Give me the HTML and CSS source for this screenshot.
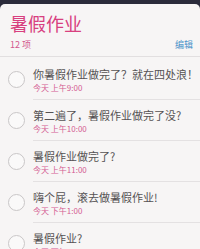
FILE: index.html
```html
<!DOCTYPE html>
<html>
<head>
<meta charset="utf-8">
<link rel="stylesheet" href="styles.css">
</head>
<body>
<div class="topbar"></div>
<div class="card">
  <header class="head">
    <h1 class="title">暑假作业</h1>
    <div class="meta">
      <span class="count">12 项</span>
      <span class="edit">编辑</span>
    </div>
  </header>
  <ul class="list">
    <li class="item"><span class="check"></span><div class="body"><div class="text">你暑假作业做完了？就在四处浪！</div><div class="time">今天 上午9:00</div></div></li>
    <li class="item"><span class="check"></span><div class="body"><div class="text">第二遍了，暑假作业做完了没?</div><div class="time">今天 上午10:00</div></div></li>
    <li class="item"><span class="check"></span><div class="body"><div class="text">暑假作业做完了?</div><div class="time">今天 上午11:00</div></div></li>
    <li class="item"><span class="check"></span><div class="body"><div class="text">嗨个屁，滚去做暑假作业!</div><div class="time">今天 下午1:00</div></div></li>
    <li class="item"><span class="check"></span><div class="body"><div class="text">暑假作业?</div><div class="time">今天 下午2:00</div></div></li>
  </ul>
</div>
</body>
</html>
```
FILE: styles.css
```css
html, body {
  margin: 0;
  padding: 0;
  background: #2b2b3b;
  overflow: hidden;
}
body {
  width: 200px;
  height: 249px;
  font-family: "Noto Sans CJK SC", "Noto Sans", sans-serif;
}
.topbar {
  height: 4px;
  background: #2b2b3b;
}
.card {
  background: #f7f5f5;
  border-top-left-radius: 5px;
  border-top-right-radius: 5px;
  height: 245px;
  overflow: hidden;
}
.head {
  padding: 6px 7px 0 10px;
  border-bottom: 1px solid #e2dfe0;
}
.title {
  margin: 0;
  font-size: 18px;
  line-height: 26px;
  font-weight: 400;
  color: #d8407f;
}
.meta {
  display: flex;
  justify-content: space-between;
  align-items: center;
  height: 16px;
  padding-bottom: 4px;
}
.count {
  font-size: 9px;
  color: #d2588f;
}
.edit {
  font-size: 9px;
  color: #4b93c9;
}
.list {
  list-style: none;
  margin: 0;
  padding: 2px 0 0 0;
}
.item {
  display: flex;
  align-items: center;
  height: 41px;
}
.check {
  width: 15px;
  height: 15px;
  border: 1px solid #c9c6c7;
  border-radius: 50%;
  margin: 0 8px 0 8px;
  flex: none;
  background: #faf9f9;
}
.body {
  flex: 1;
  height: 41px;
  border-bottom: 1px solid #e4e1e2;
  box-sizing: border-box;
  padding-top: 7px;
}
.text {
  font-size: 11px;
  line-height: 16px;
  color: #555253;
  white-space: nowrap;
}
.time {
  font-size: 8px;
  line-height: 12px;
  color: #d45c92;
}
```
